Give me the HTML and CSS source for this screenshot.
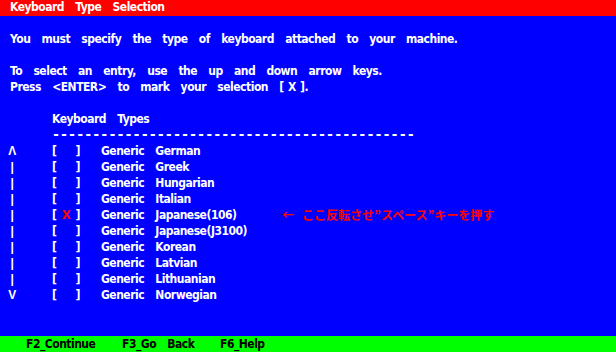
FILE: index.html
```html
<!DOCTYPE html>
<html lang="en">

<head>
    <meta charset="UTF-8">
    <meta name="viewport" content="width=device-width, initial-scale=1.0">
    <title>Keyboard Type Selection</title>
    <link rel="stylesheet" href="styles.css">
</head>

<body>
    <div class="screen">
        <div class="titlebar">Keyboard Type Selection</div>

        <div class="main">
            <div class="line">You must specify the type of keyboard attached to your machine.</div>
            <div class="line"></div>
            <div class="line">To select an entry, use the up and down arrow keys.</div>
            <div class="line">Press &lt;ENTER&gt; to mark your selection <span class="tight">[ X ].</span></div>
            <div class="line"></div>

            <div class="list">
                <div class="heading">Keyboard Types</div>
                <div class="dashes">---------------------------------------------</div>

                <div class="row"><span class="scroll">Λ</span><span class="box"><span>[</span><span></span><span>]</span></span><span class="name">Generic German</span></div>
                <div class="row"><span class="scroll">|</span><span class="box"><span>[</span><span></span><span>]</span></span><span class="name">Generic Greek</span></div>
                <div class="row"><span class="scroll">|</span><span class="box"><span>[</span><span></span><span>]</span></span><span class="name">Generic Hungarian</span></div>
                <div class="row"><span class="scroll">|</span><span class="box"><span>[</span><span></span><span>]</span></span><span class="name">Generic Italian</span></div>
                <div class="row"><span class="scroll">|</span><span class="box"><span>[</span><span class="mark">X</span><span>]</span></span><span class="name">Generic Japanese(106)</span><span class="note"><span class="arrow">←</span>ここ反転させ”スペース”キーを押す</span></div>
                <div class="row"><span class="scroll">|</span><span class="box"><span>[</span><span></span><span>]</span></span><span class="name">Generic Japanese(J3100)</span></div>
                <div class="row"><span class="scroll">|</span><span class="box"><span>[</span><span></span><span>]</span></span><span class="name">Generic Korean</span></div>
                <div class="row"><span class="scroll">|</span><span class="box"><span>[</span><span></span><span>]</span></span><span class="name">Generic Latvian</span></div>
                <div class="row"><span class="scroll">|</span><span class="box"><span>[</span><span></span><span>]</span></span><span class="name">Generic Lithuanian</span></div>
                <div class="row"><span class="scroll">V</span><span class="box"><span>[</span><span></span><span>]</span></span><span class="name">Generic Norwegian</span></div>
            </div>
        </div>

        <div class="footer">
            <span class="key">F2_Continue</span>
            <span class="key">F3_Go Back</span>
            <span class="key">F6_Help</span>
        </div>
    </div>
</body>

</html>
```

FILE: styles.css
```css
html,
body {
    margin: 0;
    padding: 0;
}

body {
    background-color: #0000ff;
    font-family: "DejaVu Sans Condensed", "DejaVu Sans", sans-serif;
    font-stretch: condensed;
    font-weight: bold;
    font-size: 12px;
    letter-spacing: -0.5px;
    word-spacing: 8px;
    color: #ffffff;
}

.screen {
    display: flex;
    flex-direction: column;
    width: 616px;
    height: 352px;
}

.titlebar {
    height: 16px;
    line-height: 14px;
    padding-left: 10px;
    background-color: #ff0000;
}

.main {
    flex: 1;
    padding: 15px 0 0 10px;
    line-height: 16px;
}

.line {
    height: 16px;
    white-space: nowrap;
}

.tight {
    word-spacing: 1px;
}

.list {
    margin-left: -3px;
}

.heading,
.dashes {
    height: 16px;
    padding-left: 45px;
}

.dashes {
    font-family: "DejaVu Sans Mono", monospace;
    font-size: 13.4px;
    letter-spacing: 0;
}

.row {
    display: flex;
    height: 16px;
    white-space: nowrap;
}

.scroll {
    width: 10px;
    text-align: center;
    margin-right: 35px;
    font-family: "Liberation Sans", sans-serif;
}

.box {
    display: flex;
    justify-content: space-between;
    width: 28px;
    margin-right: 21px;
}

.mark {
    color: #ff0000;
    font-size: 13px;
}

.name {
    width: 181px;
}

.note {
    color: #ff0000;
    font-family: "Noto Sans CJK JP", sans-serif;
    font-size: 12px;
    letter-spacing: 0;
    word-spacing: 0;
}

.arrow {
    margin-right: 8px;
}

.footer {
    display: grid;
    grid-template-columns: 96px 98px auto;
    height: 16px;
    line-height: 16px;
    background-color: #00ff00;
    color: #000000;
    padding-left: 26px;
}
```
